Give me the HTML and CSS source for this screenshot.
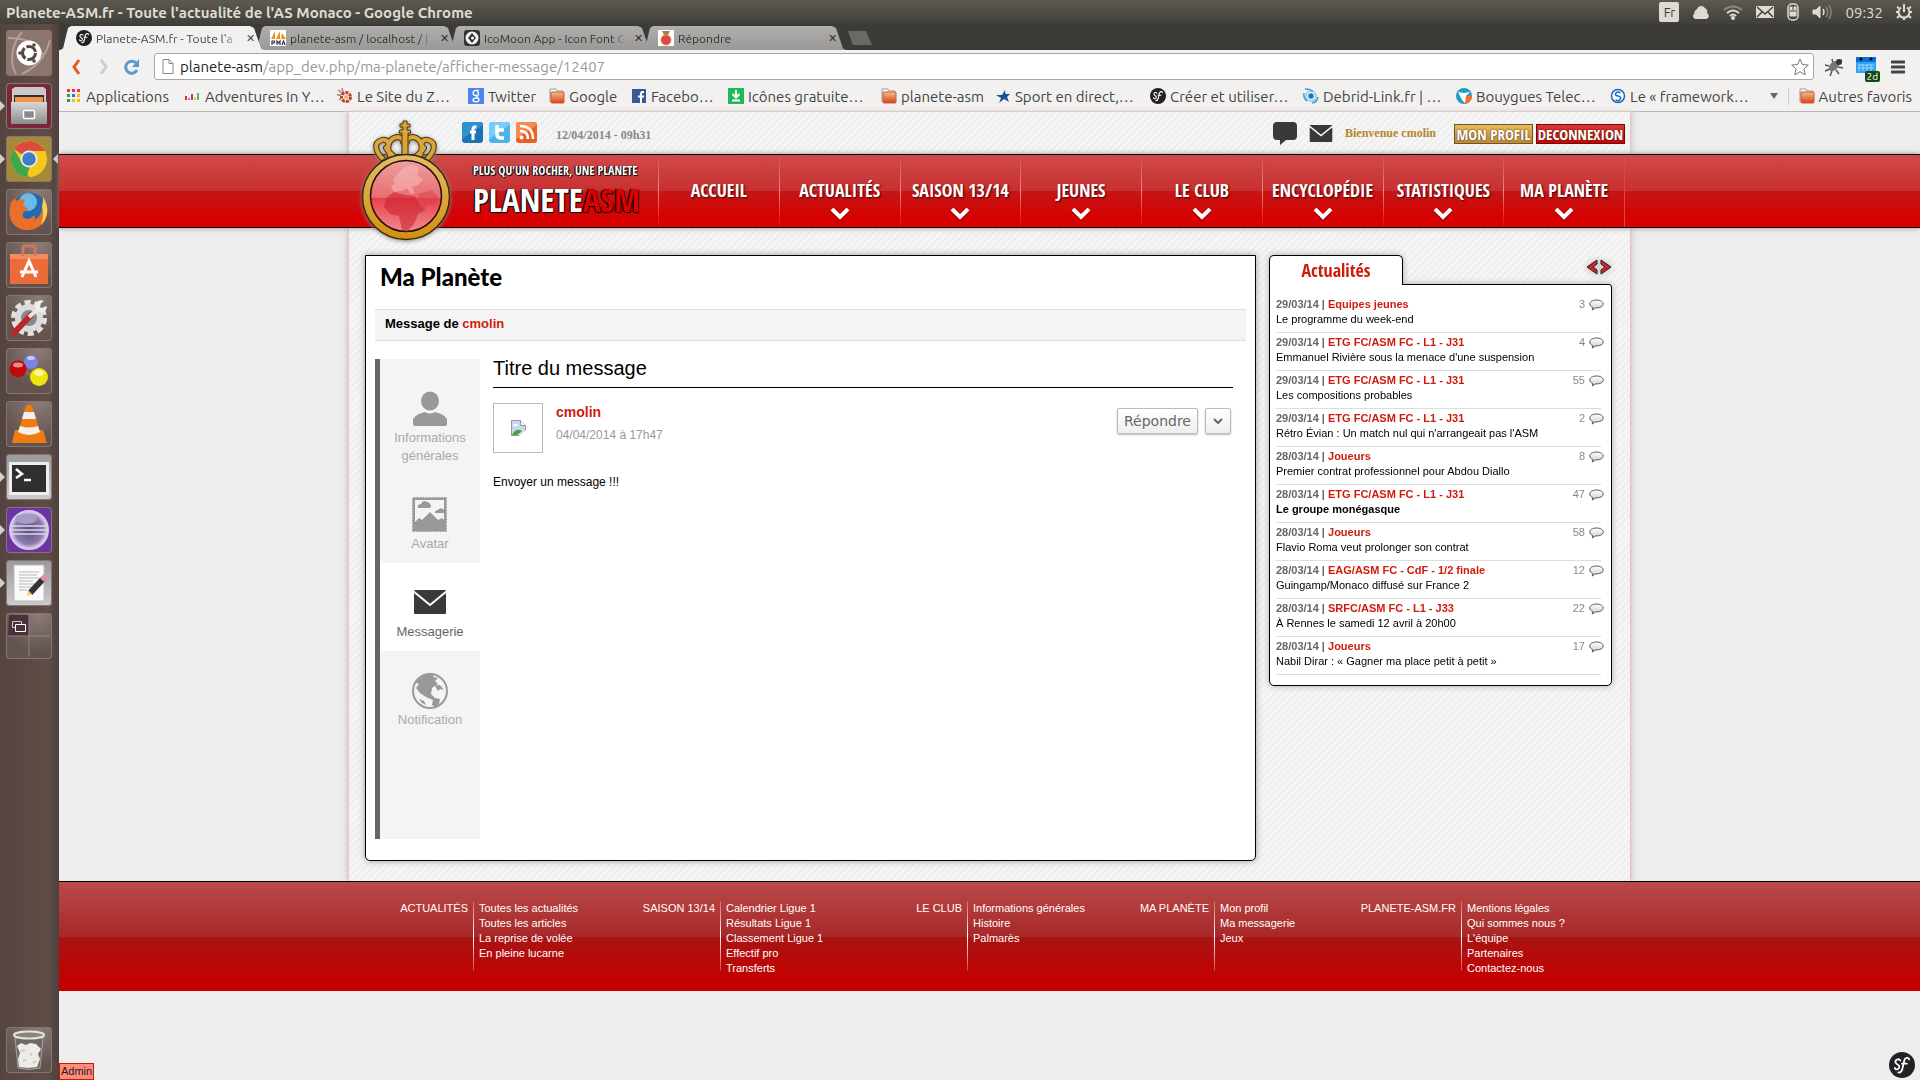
FILE: index.html
```html
<!DOCTYPE html>
<html lang="fr">
<head>
<meta charset="utf-8">
<title>Planete-ASM.fr - Toute l'actualité de l'AS Monaco</title>
<link rel="stylesheet" href="styles.css">
</head>
<body>
<svg width="0" height="0" class="defs" aria-hidden="true">
  <defs>
    <linearGradient id="gold" x1="0" y1="0" x2="0" y2="1"><stop offset="0" stop-color="#e2bd6c"/><stop offset="1" stop-color="#d2900c"/></linearGradient>
    <linearGradient id="globe" x1="0" y1="0" x2="0" y2="1"><stop offset="0" stop-color="#eda0a0"/><stop offset=".52" stop-color="#e96d70"/><stop offset=".53" stop-color="#e8404a"/><stop offset="1" stop-color="#f08a90"/></linearGradient>
    <linearGradient id="orange" x1="0" y1="0" x2="0" y2="1"><stop offset="0" stop-color="#f3c08a"/><stop offset="1" stop-color="#d9431a"/></linearGradient>
    <linearGradient id="bubble" x1="0" y1="0" x2="0" y2="1"><stop offset="0" stop-color="#fff"/><stop offset="1" stop-color="#ccc"/></linearGradient>
    <linearGradient id="steel" x1="0" y1="0" x2="0" y2="1"><stop offset="0" stop-color="#d8d8d8"/><stop offset="1" stop-color="#8c8c8c"/></linearGradient>
    <radialGradient id="orb"><stop offset="0" stop-color="#5b4a7c"/><stop offset=".75" stop-color="#8d7cb0"/><stop offset="1" stop-color="#e4dcf2"/></radialGradient>
    <symbol id="folder" viewBox="0 0 16 16"><path d="M1 2V1h6l1 2h6v2" fill="#fff" stroke="#999"/><path d="M1 2v12" stroke="#999"/><rect x="2" y="4" width="13" height="11" rx="1" fill="url(#orange)" stroke="#c65a34"/></symbol>
    <symbol id="sf" viewBox="0 0 16 16"><circle cx="8" cy="8" r="8" fill="#222226"/><path d="M7 5.200C6 3.800 3.600 4.600 4 6.400c.3 1.400 2.600 1.200 2.400 2.800C6.200 11 3.800 11.200 3.600 9.800M12.400 4.600c-.4-1.600-2.500-1.300-3 .6L8.200 10.500c-.4 1.600-1.200 2.300-2.400 2.100M8 7.200h3" fill="none" stroke="#fff" stroke-width="1.100" stroke-linecap="round"/></symbol>
    <symbol id="mail" viewBox="0 0 34 24"><path d="M2 1h30v22H2z" fill="#393939" stroke="#393939" stroke-width="2" stroke-linejoin="round"/><path d="M0 1l17 14L34 1" fill="none" stroke="#fff" stroke-width="2"/></symbol>
    <symbol id="talk" viewBox="0 0 15 12"><path d="M7.500 1C3.500 1 .800 2.700.800 5c0 1.700 1.200 2.800 3 3.500L3.200 11l3.300-2.100c4.300.2 7.700-1.400 7.700-3.900C14.200 2.700 11.500 1 7.500 1z" fill="url(#bubble)" stroke="#555"/></symbol>
    <symbol id="chev" viewBox="0 0 20 13"><path d="M2 2l8 8 8-8" fill="none" stroke="#500" stroke-width="5" opacity=".4"/><path d="M2 1l8 8 8-8" fill="none" stroke="#fff" stroke-width="4"/></symbol>
  </defs>
</svg>

<header class="panel">
  <strong class="panel-title">Planete-ASM.fr - Toute l'actualité de l'AS Monaco - Google Chrome</strong>
  <div class="indicators">
    <span class="kbd">Fr</span>
    <svg width="18" height="16" viewBox="0 0 18 16"><path d="M3 15a3 3 0 0 1-1-5 6 6 0 0 1 3-5 4.500 4.500 0 0 1 8-1 4 4 0 0 1 2 5c3 2 2 6-1 6z" fill="#dfdbd2"/></svg>
    <svg width="20" height="16" viewBox="0 0 20 16" fill="none" stroke-width="2"><path d="M1 6q9-7 18 0" stroke="#8a877f"/><path d="M4 9q6-5 12 0M7 12q3-3 6 0" stroke="#dfdbd2"/><circle cx="10" cy="14" r="1" stroke="#dfdbd2"/></svg>
    <svg width="18" height="14" viewBox="0 0 18 14"><path d="M0 1h18v12H0z" fill="#dfdbd2"/><path d="M1 2l8 7 8-7M1 12l5-5m11 5l-5-5" fill="none" stroke="#44433e" stroke-width="1.500"/></svg>
    <svg width="12" height="18" viewBox="0 0 12 18" fill="none" stroke="#dfdbd2"><rect x="1" y="1" width="10" height="16" rx="4" stroke-width="1.500"/><path d="M3 4h6v9H3z" fill="#dfdbd2"/><path d="M6 2v5M3 8h6" stroke="#44433e"/></svg>
    <svg width="20" height="16" viewBox="0 0 20 16" fill="none" stroke="#dfdbd2"><path d="M1 6h3l4-4v12l-4-4H1z" fill="#dfdbd2"/><path d="M11 5q2 3 0 6" stroke-width="1.500"/><path d="M14 3q3.500 5 0 10M17 1q4 7 0 14" stroke="#8a877f" stroke-width="1.500"/></svg>
    <time class="clock">09:32</time>
    <svg width="16" height="18" viewBox="0 0 16 18"><path d="M5 4.500a5.500 5.500 0 1 0 6 0" fill="none" stroke="#dfdbd2" stroke-width="2"/><path d="M8 1v8" stroke="#dfdbd2" stroke-width="2"/><path d="M3 5L1 4m12 1l2-1M2 9H0m14 0h2M3 13l-2 2m12-2l2 2m-7-1v3" stroke="#dfdbd2" stroke-width="2"/></svg>
  </div>
</header>

<div class="desk">
  <nav class="launcher" aria-label="Lanceur">
    <button class="tile tile-dash" aria-label="Accueil"><svg viewBox="0 0 46 46"><path d="M2 8c14 0 26 2 36 18M44 10c-4 16-12 26-28 34M10 44C4 34 4 16 16 2" fill="none" stroke="#b59f98" stroke-width="2"/><circle cx="23" cy="23" r="12.500" fill="#fff"/><circle cx="23" cy="23" r="6.500" fill="none" stroke="#554541" stroke-width="3" stroke-dasharray="11.600 2"/><circle cx="14" cy="23" r="1.800" fill="#554541"/><circle cx="28" cy="15" r="1.800" fill="#554541"/><circle cx="28" cy="31" r="1.800" fill="#554541"/></svg></button>
    <button class="tile tile-files run" aria-label="Fichiers"><svg viewBox="0 0 46 46"><path d="M6 6l3-2h28l3 2v14H6z" fill="#c9c9c9"/><path d="M8 12h30v8H8z" fill="#3a2a22"/><path d="M9 14h28v5H9z" fill="#f0944a"/><path d="M5 19h36v22H5z" fill="url(#steel)"/><rect x="17.500" y="27.500" width="11" height="8" rx="1" fill="#888" stroke="#fff" stroke-width="1.500"/></svg></button>
    <button class="tile tile-chrome run focus" aria-label="Chrome"><svg viewBox="0 0 46 46"><circle cx="23" cy="23" r="18" fill="#f6c81e"/><path d="M23 23L8 13a18 18 0 0 1 31 2H23z" fill="#dd4b3e"/><path d="M8 13l8 14 7 14A18 18 0 0 1 8 13z" fill="#3fa64b"/><path d="M16 27l8 4-4 10z" fill="#3fa64b"/><circle cx="23" cy="23" r="8.500" fill="#f3efe6"/><circle cx="23" cy="23" r="6.800" fill="#3f7dc4"/></svg></button>
    <button class="tile" aria-label="Firefox"><svg viewBox="0 0 46 46"><circle cx="24" cy="21" r="17" fill="#2468ad"/><circle cx="22" cy="13" r="9" fill="#6cb8e6"/><path d="M37 8c6 9 6 20-1 27-9 9-24 8-30-2C3 28 3 20 5 13l4-4 1 3c3-2 6-2 9-1l-2 5 5 4-5 4c-2 6 6 8 10 3 2 0 3 2 1 4 8-3 9-12 9-23z" fill="#e8702a"/><path d="M37 8c6 9 6 20-2 28 2-7 3-12 1-18 1-4 1-7 1-10z" fill="#f8d24a"/></svg></button>
    <button class="tile" aria-label="Logithèque"><svg viewBox="0 0 46 46"><path d="M4 12h38v30H4z" fill="#ec6b3a"/><path d="M4 12h38v5H4z" fill="#f58a5e"/><path d="M17 14V6q0-2 2-2h8q2 0 2 2v8" fill="none" stroke="#d8745a" stroke-width="3"/><path d="M16 35l7-16 7 16M14 30h18" fill="none" stroke="#fff" stroke-width="3"/></svg></button>
    <button class="tile" aria-label="Paramètres"><svg viewBox="0 0 46 46"><circle cx="23" cy="23" r="15.500" fill="none" stroke="#e2e2e2" stroke-width="5" stroke-dasharray="6 3.740"/><circle cx="23" cy="23" r="11" fill="#888" stroke="#dcdcdc" stroke-width="6"/><path d="M8 38l17-18" stroke="#b9262a" stroke-width="6" stroke-linecap="round"/><path d="M23 22l9-8" stroke="#e8e8e8" stroke-width="4"/><path d="M38 6a6 6 0 1 0 3 5l-6 2-2-3z" fill="#eee"/></svg></button>
    <button class="tile" aria-label="Réseau"><svg viewBox="0 0 46 46"><path d="M12 21l20 8-8-14" stroke="#8b6a4c" stroke-width="3" fill="none"/><circle cx="25" cy="14" r="7" fill="#7d82e8"/><circle cx="12" cy="21" r="8.500" fill="#c00a0a"/><circle cx="33" cy="29" r="9" fill="#eee410"/><ellipse cx="12" cy="17" rx="5" ry="2.500" fill="#ee8a8a"/><ellipse cx="33" cy="25" rx="5" ry="3" fill="#fbf7a0"/><ellipse cx="25" cy="10" rx="4" ry="2" fill="#c5c8f8"/></svg></button>
    <button class="tile" aria-label="VLC"><svg viewBox="0 0 46 46"><path d="M9 29h28l4 13H6z" fill="#ef7c12"/><path d="M20 5q3-3 6 0l8 26q-11 6-22 0z" fill="#f07c10"/><path d="M18 11h10l2 7H16zM14 25q9 3 18 0l2 6q-11 6-22 0z" fill="#f0f0ec"/></svg></button>
    <button class="tile tile-light run" aria-label="Terminal"><svg viewBox="0 0 46 46"><path d="M3 8h40v33H3z" fill="#eee"/><path d="M6 11h34v27H6z" fill="#2f2f2f"/><path d="M10 15l6 5-6 4M18 26h7" fill="none" stroke="#fff" stroke-width="2.500"/></svg></button>
    <button class="tile tile-eclipse run" aria-label="Eclipse"><svg viewBox="0 0 46 46"><circle cx="23" cy="23" r="19" fill="url(#orb)" stroke="#d5c8ea" stroke-width="2"/><path d="M5 19h36M4 23h38M5 27h36" stroke="#ded6ee" stroke-width="1.500"/><ellipse cx="20" cy="12" rx="11" ry="5" fill="#a79bc4"/></svg></button>
    <button class="tile tile-light run" aria-label="Éditeur"><svg viewBox="0 0 46 46"><path d="M8 5h30v36H8z" fill="#fafafa" stroke="#bbb"/><path d="M13 12h20M13 15h18M13 18h20M13 21h14M13 24h16M13 27h12M13 30h8" stroke="#b5b5b5"/><path d="M24 33l13-14" stroke="#333" stroke-width="6"/><path d="M36 20l4-4" stroke="#e38bb0" stroke-width="6"/><path d="M21 36l1-6 4 4z" fill="#f0d060"/></svg></button>
    <button class="tile" aria-label="Espaces de travail"><svg viewBox="0 0 46 46"><path d="M3 2h20v21H2z" fill="#4d303c"/><path d="M23 2v42M2 23h42" stroke="#94837d"/><path d="M6.500 8.500h9v6h-9z" fill="none" stroke="#ccc"/><path d="M9.500 11.500h10v7h-10z" fill="#4d303c" stroke="#fff"/></svg></button>
    <button class="tile tile-trash" aria-label="Corbeille"><svg viewBox="0 0 46 46"><path d="M9 10h28l-3 31q-11 3-22 0z" fill="#6f6763" stroke="#a8a29e"/><path d="M11 19l4-3 5 2 4-2 6 1 5 5-3 5 2 5-3 8-9 1-9-1-1-8 2-6z" fill="#ecebe8"/><path d="M15 24l4-1m5 4l2 1m-9 6l3-1m7 3l3-2" fill="none" stroke="#c4c1bc" stroke-width="1.500"/><ellipse cx="23" cy="8" rx="15" ry="3.500" fill="#8a8480" stroke="#e5e3df" stroke-width="2"/></svg></button>
  </nav>

  <div class="window">
    <div class="tabs">
      <button class="tab active"><svg class="ico"><use href="#sf"/></svg><span>Planete-ASM.fr - Toute l'a</span><i>✕</i></button>
      <button class="tab"><svg class="ico" viewBox="0 0 16 16"><path d="M0 0h16v16H0z" fill="#fff"/><path d="M1 9l4-8v8zM6 9l4-8v8zM11 9l1-6 4 6z" fill="#f29111"/><path d="M2 15v-4h2.500v2H2M7 15v-4l1.500 2 1.500-2v4M12 15l1.500-4 1.500 4" fill="none" stroke="#336" stroke-width="1.200"/></svg><span>planete-asm / localhost / |</span><i>✕</i></button>
      <button class="tab"><svg class="ico" viewBox="0 0 16 16"><rect width="16" height="16" rx="3" fill="#333"/><circle cx="8" cy="8" r="6.500" fill="#f5f5f5"/><path d="M8 3l4 5-4 5-4-5z" fill="#333"/><circle cx="8.500" cy="8" r="1.500" fill="#fff"/></svg><span>IcoMoon App - Icon Font G</span><i>✕</i></button>
      <button class="tab"><svg class="ico" viewBox="0 0 16 16"><path d="M0 0h16v16H0z" fill="#fff"/><path d="M4 1h8l-2 4H6z" fill="#a8833a"/><circle cx="8" cy="10" r="5" fill="#e8404a" stroke="#c39a4c"/></svg><span>Répondre</span><i>✕</i></button>
      <button class="newtab" aria-label="Nouvel onglet"></button>
    </div>
    <div class="toolbar">
      <button class="tool" aria-label="Précédent"><svg width="10" height="16" viewBox="0 0 10 16"><path d="M8 1L3 8l5 7" fill="none" stroke="#dd5a24" stroke-width="3"/></svg></button>
      <button class="tool" aria-label="Suivant"><svg width="10" height="16" viewBox="0 0 10 16"><path d="M2 1l5 7-5 7" fill="none" stroke="#d0cecb" stroke-width="3"/></svg></button>
      <button class="tool" aria-label="Recharger"><svg width="16" height="16" viewBox="0 0 16 16"><path d="M13 11a6 6 0 1 1-1-7" fill="none" stroke="#5b98d2" stroke-width="3"/><path d="M15 0v8H8z" fill="#5b98d2"/></svg></button>
      <div class="omnibox">
        <svg width="12" height="15" viewBox="0 0 12 15"><path d="M1 .500h6l4 4v10H1z" fill="#fff" stroke="#888"/><path d="M7 .500v4h4" fill="none" stroke="#888"/></svg>
        <span class="url"><b>planete-asm</b>/app_dev.php/ma-planete/afficher-message/12407</span>
        <svg width="18" height="18" viewBox="0 0 18 18"><path d="M9 1l2.400 5.500 5.900.500-4.500 3.900 1.400 5.900L9 13.700l-5.200 3.100 1.400-5.900L.700 7l5.900-.500z" fill="#fff" stroke="#777"/></svg>
      </div>
      <svg class="bug" width="20" height="20" viewBox="0 0 20 20"><path d="M5 9l-4-1m5 4l-5 2m7 0l-2 5M9 6L8 2m5 4l5-3M14 10l5 1M12 13l3 4" stroke="#555" stroke-width="1.500"/><ellipse cx="10" cy="9" rx="6" ry="4" transform="rotate(-45 10 9)" fill="#777"/><circle cx="15" cy="5" r="3" fill="#333"/></svg>
      <div class="calendar"><svg width="20" height="18" viewBox="0 0 20 18"><path d="M0 1h20v16H0z" fill="#32a4f4"/><path d="M0 1h20v5H0z" fill="#0a70d8"/><path d="M3 8v7M7 8v7M11 8v7M15 8v7M2 9h16M2 12h16" stroke="#9bd5ff"/><circle cx="5" cy="3" r="1.500"/><circle cx="15" cy="3" r="1.500"/></svg><span class="badge">2d</span></div>
      <button class="tool" aria-label="Menu"><svg width="14" height="14" viewBox="0 0 14 14"><path d="M1 2h12M1 7h12M1 12h12" stroke="#444" stroke-width="3" stroke-linecap="round"/></svg></button>
    </div>
    <nav class="bookmarks" aria-label="Favoris">
      <a href="#"><svg class="ico" viewBox="0 0 16 16"><path d="M1 1h3v3H1zM6 1h3v3H6zM11 1h3v3h-3z" fill="#e33"/><path d="M1 6h3v3H1zM1 11h3v3H1z" fill="#2a9d4a"/><path d="M6 6h3v3H6z" fill="#27e"/><path d="M11 6h3v3h-3zM11 11h3v3h-3zM6 11h3v3H6z" fill="#fb0"/></svg>Applications</a>
      <a href="#"><svg class="ico" viewBox="0 0 16 16"><path d="M0 8h2v4H0z" fill="#e22"/><path d="M3 10h2v2H3z" fill="#e6a"/><path d="M6 6h2v6H6z" fill="#a3c"/><path d="M9 9h2v3H9z" fill="#ec3"/><path d="M12 5h2v7h-2z" fill="#4c4"/></svg>Adventures In Y…</a>
      <a href="#"><svg class="ico" viewBox="0 0 16 16"><circle cx="9" cy="9" r="4.500" fill="none" stroke="#b5442a" stroke-width="3" stroke-dasharray="3 1"/><circle cx="9" cy="9" r="2" fill="#f0b060"/><path d="M1 2l4 3M5 0l1 4M0 7h4M2 12l3-2" stroke="#b77" stroke-width="1.500"/></svg>Le Site du Z…</a>
      <a href="#"><svg class="ico" viewBox="0 0 16 16"><rect width="16" height="16" rx="1" fill="#4a86ee"/><path d="M11 2.500H8a2.500 2.500 0 1 0 1 4.500M9 3q3 3 0 5.500c-1 1 2 1 2 3 0 3-6 3-6 .5C5 10 8 10 9.500 10" fill="none" stroke="#fff" stroke-width="1.300"/></svg>Twitter</a>
      <a href="#"><svg class="ico"><use href="#folder"/></svg>Google</a>
      <a href="#"><svg class="ico" viewBox="0 0 16 16"><path d="M1 1h14v14H1z" fill="#3b5998"/><path d="M13 4h-1.500Q10 4 10 6v9M7 8.500h6" fill="none" stroke="#fff" stroke-width="2"/></svg>Facebo…</a>
      <a href="#"><svg class="ico" viewBox="0 0 16 16"><path d="M0 0h16v16H0z" fill="#1db954"/><path d="M8 2v7M4.500 6L8 9.500 11.500 6M4 12.500h8" fill="none" stroke="#fff" stroke-width="2"/></svg>Icônes gratuite…</a>
      <a href="#"><svg class="ico"><use href="#folder"/></svg>planete-asm</a>
      <a href="#"><svg class="ico" viewBox="0 0 16 16"><path d="M10 2l.5 4H15l-3 3 2 5-5-3-5 4 2-5-5-3h6z" fill="#1a4fa0"/></svg>Sport en direct,…</a>
      <a href="#"><svg class="ico"><use href="#sf"/></svg>Créer et utiliser…</a>
      <a href="#"><svg class="ico" viewBox="0 0 16 16" fill="none" stroke="#3a9fd6"><circle cx="8" cy="8" r="2.500" fill="#1b6fb0"/><circle cx="8" cy="8" r="5" stroke-width="1.500" stroke="#8cc8e8"/><path d="M2 1q5 0 8 2M15 9q-1 5-6 6M1 5q-1 5 3 8" stroke-width="1.500"/></svg>Debrid-Link.fr | …</a>
      <a href="#"><svg class="ico" viewBox="0 0 16 16"><circle cx="8" cy="8" r="8" fill="#1aa0c0"/><path d="M8 16a8 8 0 0 0 8-9L7 9z" fill="#f07030"/><path d="M2 4l6 1 6-1-4 4-1 7-3-3z" fill="#fff"/></svg>Bouygues Telec…</a>
      <a href="#"><svg class="ico" viewBox="0 0 16 16"><circle cx="8" cy="8" r="6.500" fill="#fff" stroke="#1a6ac0" stroke-width="1.500"/><path d="M10.500 5Q8 3 6 5t2 3 2 3.500-4.500 0" fill="none" stroke="#1a6ac0" stroke-width="1.500"/></svg>Le « framework…</a>
      <button class="more" aria-label="Plus de favoris"><svg width="8" height="6" viewBox="0 0 8 6"><path d="M0 0h8L4 6z" fill="#666"/></svg></button>
      <a href="#" class="others"><svg class="ico"><use href="#folder"/></svg>Autres favoris</a>
    </nav>

    <div class="site">
      <div class="strip topbar">
        <div class="social">
          <a href="#" aria-label="Facebook"><svg width="21" height="21" viewBox="0 0 21 21"><rect width="21" height="21" rx="3" fill="#1b72b4"/><path d="M0 3q0-3 3-3h15q3 0 3 3L0 17z" fill="#2d93cf"/><path d="M14.500 5H13q-2 0-2 2v11M8 10h6" fill="none" stroke="#fff" stroke-width="3"/></svg></a>
          <a href="#" aria-label="Twitter"><svg width="21" height="21" viewBox="0 0 21 21"><rect width="21" height="21" rx="3" fill="#4cb2ea"/><path d="M0 3q0-3 3-3h15q3 0 3 3L0 17z" fill="#76cdf7"/><path d="M8 3v9q0 4 4 4h3M8 8h7" fill="none" stroke="#fff" stroke-width="3.500"/></svg></a>
          <a href="#" aria-label="RSS"><svg width="21" height="21" viewBox="0 0 21 21"><rect width="21" height="21" rx="3" fill="#ea6124"/><path d="M0 3q0-3 3-3h15q3 0 3 3L0 17z" fill="#f48c4e"/><circle cx="5.500" cy="15.500" r="2" fill="#fff"/><path d="M4 9q8 0 8 8M4 4q13 0 13 13" fill="none" stroke="#fff" stroke-width="2.500"/></svg></a>
        </div>
        <time class="stamp">12/04/2014 - 09h31</time>
        <div class="account">
          <svg width="24" height="23" viewBox="0 0 24 23"><path d="M4 0h16q4 0 4 4v10q0 4-4 4h-7l-6 5v-5H4q-4 0-4-4V4q0-4 4-4z" fill="#393939"/></svg>
          <svg width="24" height="17"><use href="#mail"/></svg>
          <span class="welcome">Bienvenue cmolin</span>
          <button class="pill gold">MON PROFIL</button><button class="pill red">DECONNEXION</button>
        </div>
      </div>

      <div class="band">
        <div class="band-in">
          <a href="#" class="brand" aria-label="Planete ASM">
            <svg class="medal" width="94" height="124" viewBox="0 0 94 124">
              <g stroke="#4a3508" fill="none" stroke-linejoin="round"><path d="M27 42C18 34 14 24 24 21c6-1 9 5 4 8 3 5 8 8 12 12M67 42c9-8 13-18 3-21-6-1-9 5-4 8-3 5-8 8-12 12M34 40c-6-10-5-20 5-22 6 0 7 5 6 8M60 40c6-10 5-20-5-22-6 0-7 5-6 8" stroke-width="6"/><path d="M27 42C18 34 14 24 24 21c6-1 9 5 4 8 3 5 8 8 12 12M67 42c9-8 13-18 3-21-6-1-9 5-4 8-3 5-8 8-12 12M34 40c-6-10-5-20 5-22 6 0 7 5 6 8M60 40c6-10 5-20-5-22-6 0-7 5-6 8" stroke="#d9a63c" stroke-width="4"/></g>
              <path d="M44 42V14h-3l1-3h3V8h-3V5h3V2h4v3h3v3h-3v3h3l1 3h-3v28z" fill="#d9a63c" stroke="#4a3508"/>
              <path d="M24 42q23-11 46 0" fill="none" stroke="#4a3508" stroke-width="2"/>
              <ellipse cx="48" cy="78" rx="43.500" ry="42.500" fill="url(#gold)" stroke="#3b2a06" stroke-width="1.500"/>
              <g transform="translate(1 2)"><ellipse cx="47" cy="75" rx="35.500" ry="35.500" fill="url(#globe)" stroke="#2a0c06" stroke-width="1.500"/>
              <path d="M34 59l5-7 7-6 8-2 6 3-2 7 6 4-5 6-6 2 3 6-4 1-4-6-5 3-8 1-3-6 4-3z" fill="#f6b8b8" opacity=".6"/>
              <path d="M27 77l8-6 12 3 9 1 5 9 5 5-7 4-4 10-7 8-5-2-3-14-9-2-6-7z" fill="#c9202a" opacity=".55"/><path d="M59 73l14-4 6 6-4 10-6-2-3 6-7-8z" fill="#d94048" opacity=".5"/></g>
            </svg>
            <span class="words"><span class="slogan">PLUS QU'UN ROCHER, UNE PLANETE</span><span class="name">PLANETE<em>ASM</em></span></span>
          </a>
          <ul class="menu">
            <li><a href="#">ACCUEIL</a></li>
            <li><a href="#">ACTUALITÉS<svg class="chev"><use href="#chev"/></svg></a></li>
            <li><a href="#">SAISON 13/14<svg class="chev"><use href="#chev"/></svg></a></li>
            <li><a href="#">JEUNES<svg class="chev"><use href="#chev"/></svg></a></li>
            <li><a href="#">LE CLUB<svg class="chev"><use href="#chev"/></svg></a></li>
            <li><a href="#">ENCYCLOPÉDIE<svg class="chev"><use href="#chev"/></svg></a></li>
            <li><a href="#">STATISTIQUES<svg class="chev"><use href="#chev"/></svg></a></li>
            <li><a href="#">MA PLANÈTE<svg class="chev"><use href="#chev"/></svg></a></li>
          </ul>
        </div>
      </div>

      <div class="strip main">
        <main class="card">
          <h1>Ma Planète</h1>
          <p class="crumb">Message de <a href="#">cmolin</a></p>
          <div class="cols">
            <nav class="side" aria-label="Ma Planète">
              <a href="#" class="first"><svg viewBox="0 0 36 36" fill="#999"><ellipse cx="18" cy="10" rx="9" ry="9.500"/><path d="M1 28q3-5 12-7 5 3 10 0 9 2 12 7v5q0 2-2 2H3q-2 0-2-2z"/></svg>Informations<br>générales</a>
              <a href="#"><svg viewBox="0 0 36 36"><path d="M1.500 1.500h32v32h-32z" fill="#f4f4f4" stroke="#999" stroke-width="3"/><path d="M.500.500h34v34H.500z" fill="none" stroke="#f4f4f4" stroke-dasharray="1 2"/><path d="M2 26l5-5 3 2 8-8 8 8 4-2 4 4v9H2zM6 11q-1-4 3-4 2-5 6-2 3 0 4 4 0 2-2 2zM23 16q0-3 3-3 2-3 5-1l2 1v3z" fill="#999"/></svg>Avatar</a>
              <a href="#" class="on"><svg viewBox="0 0 36 36"><use href="#mail" x="1" y="5" width="34" height="24"/></svg>Messagerie</a>
              <a href="#"><svg viewBox="0 0 36 36"><circle cx="18" cy="18" r="17" fill="#f4f4f4" stroke="#999" stroke-width="2"/><path d="M6 7l7-5 9-1-1 3 5 1-3 3 3 3-6 4-1 6 4 4 5 1-1 5-4 3-3-2 1-5-7-3-6-4-4-5 3-4-3-1zM23 13q4-2 6 0l3 4-4-1-2 2zM7 26l5 2 2 4-4-2z" fill="#999"/></svg>Notification</a>
            </nav>
            <article class="message">
              <h2>Titre du message</h2>
              <div class="meta">
                <span class="avatar"><svg width="15" height="16" viewBox="0 0 15 16"><path d="M.500.500h9l5 5v10H.500z" fill="#c6d8f5" stroke="#999"/><path d="M9.500.500v5h5" fill="#fff" stroke="#999"/><path d="M2 6q1-3 4-2l1 2z" fill="#fff"/><path d="M1 15q3-6 8-5l2 1-5 4z" fill="#4ca32c"/><path d="M8 16l7-6v6z" fill="#fff"/></svg></span>
                <div class="who"><a href="#">cmolin</a><time>04/04/2014 à 17h47</time></div>
                <div class="actions"><button>Répondre</button><button class="drop" aria-label="Plus d'actions"><svg width="10" height="6" viewBox="0 0 10 6"><path d="M1 1l4 4 4-4" fill="none" stroke="#666" stroke-width="2"/></svg></button></div>
              </div>
              <p>Envoyer un message !!!</p>
            </article>
          </div>
        </main>

        <aside class="news">
          <div class="news-head"><h3>Actualités</h3>
            <svg class="arrows" width="26" height="16" viewBox="0 0 26 16" fill="#d32323" stroke="#222"><path d="M11 1v4L7 8l4 3v4L1 8zM15 1v4l4 3-4 3v4l10-7z"/></svg></div>
          <ul class="list">
            <li><p><b>29/03/14 | <a href="#">Equipes jeunes</a></b><span>3<svg><use href="#talk"/></svg></span></p><p>Le programme du week-end</p></li>
            <li><p><b>29/03/14 | <a href="#">ETG FC/ASM FC - L1 - J31</a></b><span>4<svg><use href="#talk"/></svg></span></p><p>Emmanuel Rivière sous la menace d'une suspension</p></li>
            <li><p><b>29/03/14 | <a href="#">ETG FC/ASM FC - L1 - J31</a></b><span>55<svg><use href="#talk"/></svg></span></p><p>Les compositions probables</p></li>
            <li><p><b>29/03/14 | <a href="#">ETG FC/ASM FC - L1 - J31</a></b><span>2<svg><use href="#talk"/></svg></span></p><p>Rétro Évian : Un match nul qui n'arrangeait pas l'ASM</p></li>
            <li><p><b>28/03/14 | <a href="#">Joueurs</a></b><span>8<svg><use href="#talk"/></svg></span></p><p>Premier contrat professionnel pour Abdou Diallo</p></li>
            <li><p><b>28/03/14 | <a href="#">ETG FC/ASM FC - L1 - J31</a></b><span>47<svg><use href="#talk"/></svg></span></p><p><strong>Le groupe monégasque</strong></p></li>
            <li><p><b>28/03/14 | <a href="#">Joueurs</a></b><span>58<svg><use href="#talk"/></svg></span></p><p>Flavio Roma veut prolonger son contrat</p></li>
            <li><p><b>28/03/14 | <a href="#">EAG/ASM FC - CdF - 1/2 finale</a></b><span>12<svg><use href="#talk"/></svg></span></p><p>Guingamp/Monaco diffusé sur France 2</p></li>
            <li><p><b>28/03/14 | <a href="#">SRFC/ASM FC - L1 - J33</a></b><span>22<svg><use href="#talk"/></svg></span></p><p>À Rennes le samedi 12 avril à 20h00</p></li>
            <li><p><b>28/03/14 | <a href="#">Joueurs</a></b><span>17<svg><use href="#talk"/></svg></span></p><p>Nabil Dirar : « Gagner ma place petit à petit »</p></li>
          </ul>
        </aside>
      </div>

      <footer class="footer">
        <div class="footer-in">
          <section><h4>ACTUALITÉS</h4><ul><li><a href="#">Toutes les actualités</a></li><li><a href="#">Toutes les articles</a></li><li><a href="#">La reprise de volée</a></li><li><a href="#">En pleine lucarne</a></li></ul></section>
          <section><h4>SAISON 13/14</h4><ul><li><a href="#">Calendrier Ligue 1</a></li><li><a href="#">Résultats Ligue 1</a></li><li><a href="#">Classement Ligue 1</a></li><li><a href="#">Effectif pro</a></li><li><a href="#">Transferts</a></li></ul></section>
          <section><h4>LE CLUB</h4><ul><li><a href="#">Informations générales</a></li><li><a href="#">Histoire</a></li><li><a href="#">Palmarès</a></li></ul></section>
          <section><h4>MA PLANÈTE</h4><ul><li><a href="#">Mon profil</a></li><li><a href="#">Ma messagerie</a></li><li><a href="#">Jeux</a></li></ul></section>
          <section><h4>PLANETE-ASM.FR</h4><ul><li><a href="#">Mentions légales</a></li><li><a href="#">Qui sommes nous ?</a></li><li><a href="#">L'équipe</a></li><li><a href="#">Partenaires</a></li><li><a href="#">Contactez-nous</a></li></ul></section>
        </div>
      </footer>
      <a href="#" class="admin">Admin</a>
      <button class="debug" aria-label="Symfony"><svg width="26" height="26"><use href="#sf"/></svg></button>
    </div>
  </div>
</div>
</body>
</html>
```
FILE: styles.css
```css
* { box-sizing: border-box; }
body { margin: 0; min-height: 100vh; display: flex; flex-direction: column; background: #3c3b37; font-family: "Liberation Sans", Arial, sans-serif; font-size: 12px; color: #000; }
h1, h2, h3, h4, p, ul { margin: 0; padding: 0; }
ul { list-style: none; }
a { color: inherit; text-decoration: none; }
button { font: inherit; padding: 0; border: 0; background: none; cursor: pointer; }
svg { flex: none; display: block; }
.defs { position: absolute; }

/* system panel */
.panel { height: 24px; display: flex; align-items: center; justify-content: space-between; padding: 0 8px 0 6px; background: linear-gradient(#5c5a50, #403f3a); color: #dfdbd2; font-family: Ubuntu, "Open Sans", sans-serif; font-size: 15px; }
.indicators { display: flex; align-items: center; gap: 13px; }
.kbd { width: 20px; height: 20px; border-radius: 2px; background: #dfdbd2; color: #3c3b37; font-size: 13px; line-height: 20px; text-align: center; }

.desk { flex: 1; display: flex; }
.launcher { width: 59px; padding: 6px 7px 7px 6px; display: flex; flex-direction: column; gap: 7px; background: linear-gradient(90deg, #54443f, #5f4d47 80%, #4d403c); }
.tile { position: relative; width: 46px; height: 46px; border-radius: 4px; background: radial-gradient(circle at 70% 0, #8c7d78, #63534e 70%); box-shadow: inset 0 0 0 1px #86766f; }
.tile svg { width: 46px; height: 46px; }
.tile-dash { background: #8e7670; }
.tile-files { background: #78283a; }
.tile-chrome { background: #a68a3c; }
.tile-light { background: linear-gradient(#999, #ccc); }
.tile-eclipse { background: #6b34a0; }
.tile-trash { margin-top: auto; }
.run::before { content: ""; position: absolute; left: -6px; top: 18px; border: 5px solid transparent; border-left-color: #d5d0cc; border-right: 0; }
.focus::after { content: ""; position: absolute; right: -6px; top: 18px; border: 5px solid transparent; border-right-color: #d5d0cc; border-left: 0; }

/* browser window */
.window { flex: 1; min-width: 0; display: flex; flex-direction: column; font-family: Ubuntu, "Open Sans", sans-serif; }
.tabs { height: 26px; display: flex; align-items: flex-end; padding-left: 1px; background: #3c3b37; }
.tab { position: relative; z-index: 0; width: 204px; height: 24px; margin-right: -10px; padding: 0 6px 0 16px; display: flex; align-items: center; gap: 4px; font-size: 12px; color: #33302b; }
.tab::before { content: ""; position: absolute; inset: 0; z-index: -1; background: linear-gradient(#b0afad, #999896); clip-path: polygon(0 100%, 3px 94%, 8px 8%, 11px 0, 190px 0, 194px 8%, 201px 94%, 100% 100%); }
.tab.active { z-index: 1; color: #444; }
.tab.active::before { background: #f2f1f0; }
.tab span { flex: 1; white-space: nowrap; text-align: left; mask-image: linear-gradient(90deg, #000 90%, transparent); }
.tab i { width: 16px; font-style: normal; font-size: 11px; text-align: center; }
.ico { width: 16px; height: 16px; }
.newtab { width: 24px; height: 14px; margin: 0 0 5px 12px; background: #6a6964; clip-path: polygon(0 0, 75% 0, 100% 100%, 20% 100%); }
.toolbar { height: 33px; display: flex; align-items: center; padding: 0 12px 0 7px; gap: 8px; background: #f2f1f0; }
.tool { display: flex; justify-content: center; width: 20px; }
.omnibox { flex: 1; height: 27px; margin-left: 4px; padding: 0 4px 0 7px; display: flex; align-items: center; gap: 6px; border: 1px solid #a9a6a2; border-radius: 3px; background: #fff; font-size: 15px; }
.url { flex: 1; color: #999; }
.url b { font-weight: 400; color: #222; }
.bug { margin: 0 4px 0 2px; }
.calendar { position: relative; width: 24px; height: 22px; }
.badge { position: absolute; right: 0; bottom: -4px; padding: 0 2px; border-radius: 2px; background: #14490f; color: #fff; font-size: 10px; line-height: 11px; }
.bookmarks { height: 29px; display: grid; grid-template-columns: 119px 152px 131px 81px 82px 97px 153px 114px 155px 153px 153px 154px 151px 1fr auto; align-items: center; padding: 0 8px 2px 7px; background: #f2f1f0; border-bottom: 1px solid #b9b7b3; font-size: 15px; color: #444; white-space: nowrap; }
.bookmarks a { display: flex; align-items: center; gap: 4px; }
.more { display: flex; justify-content: center; }
.bookmarks .others { padding-left: 10px; border-left: 1px solid #d0cecb; }

/* site */
.site { position: relative; flex: 1; background: #ededed; font-family: "Liberation Sans", Arial, sans-serif; }
.strip { max-width: 1281px; margin: 0 auto; background: repeating-linear-gradient(135deg, #f5f5f5 0 3px, #eee 3px 5px); box-shadow: 2px 0 2px #e2c8c8, -2px 0 2px #e2c8c8, 5px 0 5px #e4dede, -5px 0 5px #e4dede; }
.topbar { height: 42px; display: flex; align-items: flex-start; padding: 10px 5px 0 113px; font-family: "Liberation Serif", "Times New Roman", serif; font-weight: 700; }
.social { display: flex; gap: 6px; }
.stamp { margin-left: 19px; line-height: 26px; color: #888; }
.account { margin-left: auto; display: flex; align-items: center; }
.account svg { margin-right: 12px; }
.welcome { color: #b5852c; margin-right: 18px; }
.pill { height: 20px; border: 1px solid #6d5520; font: 700 15px/18px "Open Sans Condensed", "Open Sans", sans-serif; color: #fff; text-shadow: 0 0 2px #420; white-space: nowrap; }
.gold { width: 79px; background: linear-gradient(#e8bb58, #b98a3c); margin-right: 3px; }
.red { width: 89px; background: linear-gradient(#d83a3a, #b80a0a); border-color: #800; }

.band { position: relative; z-index: 1; border: 1px solid #000; border-width: 1px 0; background: linear-gradient(#d04a4a, #c83030 50%, #c41616 50%, #d80000 90%); box-shadow: 0 0 5px #888; }
.band-in { max-width: 1281px; margin: 0 auto; padding: 0 5px 0 9px; display: flex; }
.brand { width: 300px; height: 72px; display: flex; gap: 21px; }
.medal { margin-top: -36px; overflow: visible; filter: drop-shadow(0 1px 2px #888); }
.words { display: flex; flex-direction: column; color: #fff; font-family: "Open Sans Condensed", "Open Sans", sans-serif; font-weight: 700; text-shadow: 1px 1px 1px #000, -1px 0 1px #000; white-space: nowrap; }
.slogan { font-size: 12px; line-height: 16px; margin-top: 8px; }
.name { font-size: 33px; line-height: 42px; }
.name em { font-style: normal; color: #d00; }
.menu { flex: 1; display: grid; grid-template-columns: repeat(8, 1fr); border-right: 1px solid #d44; }
.menu li { border-left: 1px solid; border-image: linear-gradient(#d04a4a, #e88, #d00) 1; }
.menu a { display: flex; flex-direction: column; align-items: center; padding-top: 25px; color: #fff; font: 700 18px/20px "Open Sans Condensed", "Open Sans", sans-serif; text-shadow: 1px 1px 2px #400; white-space: nowrap; }
.chev { width: 20px; height: 13px; margin-top: 8px; }

.main { display: flex; align-items: flex-start; gap: 13px; padding: 27px 18px 20px 16px; }
.card { flex: 1; padding: 7px 9px 21px; border: 1px solid #000; border-radius: 0 0 5px 5px; background: #fff; box-shadow: 0 0 6px #999; }
.card h1 { margin: 0 0 18px 5px; font: 900 24px/28px Lato, sans-serif; }
.crumb { padding: 0 10px 2px; border: 1px solid #e0e0e0; border-width: 1px 0; background: #f4f4f4; font-size: 13px; font-weight: 700; line-height: 28px; }
.crumb a, .who a, .news a { color: #d01b0c; }
.cols { display: flex; margin-top: 18px; }
.side { width: 105px; min-height: 480px; border-left: 5px solid #666; background: #f4f4f4; color: #aaa; font-size: 13px; line-height: 18px; text-align: center; }
.side a { display: flex; flex-direction: column; align-items: center; padding: 22px 0 10px; }
.side .first { padding-top: 32px; }
.side .on { background: #fff; color: #666; }
.side svg { width: 36px; height: 36px; margin-bottom: 2px; }
.message { flex: 1; margin: 0 13px; }
.message h2 { padding-bottom: 10px; border-bottom: 1px solid #000; font-size: 20px; font-weight: 400; line-height: 18px; }
.meta { display: flex; margin-top: 15px; }
.avatar { width: 50px; height: 50px; display: flex; align-items: center; justify-content: center; border: 1px solid #bbb; }
.who { margin-left: 13px; }
.who a { display: block; font-size: 14px; font-weight: 700; line-height: 18px; }
.who time { color: #999; line-height: 28px; }
.actions { margin: 5px 2px 0 auto; display: flex; align-items: flex-start; gap: 7px; }
.actions button { height: 26px; padding: 0 6px; border: 1px solid #bbb; border-radius: 2px; background: linear-gradient(#fff, #eee); box-shadow: 0 1px 2px #bbb; color: #666; font: 14px "DejaVu Sans", sans-serif; }
.actions .drop { width: 26px; padding: 0 7px; }
.message p { margin-top: 19px; line-height: 20px; }

.news { width: 343px; filter: drop-shadow(0 0 3px #aaa); }
.news-head { display: flex; justify-content: space-between; }
.news h3 { position: relative; z-index: 1; width: 134px; height: 30px; margin-bottom: -1px; border: 1px solid #000; border-bottom: 0; border-radius: 5px 5px 0 0; background: #fff; color: #d01b0c; font: 700 18px/28px "Open Sans Condensed", "Open Sans", sans-serif; text-align: center; }
.arrows { margin-top: 4px; }
.list { padding: 10px 10px 10px 6px; border: 1px solid #000; border-radius: 0 3px 5px 5px; background: #fff; font-size: 11px; line-height: 15px; }
.list li { padding: 2px 0 5px; border-bottom: 1px solid #ddd; }
.list p { display: flex; justify-content: space-between; }
.list b { color: #666; }
.list span { display: flex; align-items: center; gap: 4px; margin-right: -3px; color: #888; }
.list span svg { width: 15px; height: 12px; }

.footer { position: relative; border-top: 1px solid #000; background: linear-gradient(#ba4a4a, #a82828 50%, #a81414 50%, #c40000 90%); color: #fff; font-size: 11px; line-height: 15px; }
.footer-in { max-width: 1281px; min-height: 109px; margin: 0 auto; padding: 19px 46px 15px 0; display: grid; grid-template-columns: repeat(5, 1fr); }
.footer section { display: grid; grid-template-columns: 119px 1fr; gap: 5px; }
.footer h4 { font-size: 11px; font-weight: 400; text-align: right; }
.footer ul { padding-left: 6px; background: linear-gradient(#c66, #fff, #c44) left top / 1px 70px no-repeat; }

.admin { position: absolute; left: 0; bottom: 0; padding: 0 1px; border: 1px solid #c31a0c; background: #ff8a7a; color: #222; font-size: 11px; line-height: 15px; }
.debug { position: absolute; right: 5px; bottom: 2px; }
```
